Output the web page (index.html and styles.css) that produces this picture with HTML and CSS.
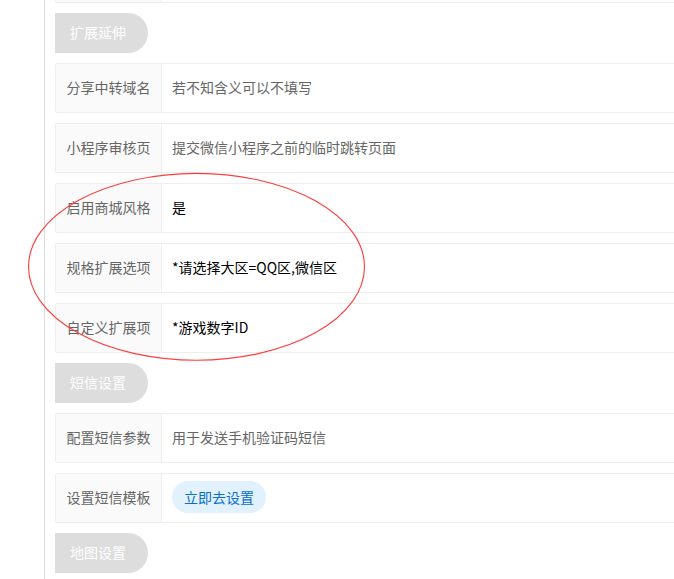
FILE: index.html
```html
<!DOCTYPE html>
<html lang="zh-CN">
<head>
<meta charset="utf-8">
<title>设置</title>
<link rel="stylesheet" href="styles.css">
</head>
<body>
<div class="page">
  <div class="panel">
    <div class="row"><div class="label"></div><div class="value desc"></div></div>

    <div class="section">扩展延伸</div>
    <div class="row"><div class="label">分享中转域名</div><div class="value desc">若不知含义可以不填写</div></div>
    <div class="row"><div class="label">小程序审核页</div><div class="value desc">提交微信小程序之前的临时跳转页面</div></div>
    <div class="row"><div class="label">启用商城风格</div><div class="value">是</div></div>
    <div class="row"><div class="label">规格扩展选项</div><div class="value">*请选择大区=QQ区,微信区</div></div>
    <div class="row"><div class="label">自定义扩展项</div><div class="value">*游戏数字ID</div></div>

    <div class="section">短信设置</div>
    <div class="row"><div class="label">配置短信参数</div><div class="value desc">用于发送手机验证码短信</div></div>
    <div class="row"><div class="label">设置短信模板</div><div class="value"><a class="pill" href="#">立即去设置</a></div></div>

    <div class="section">地图设置</div>
  </div>
</div>
<svg class="mark" width="674" height="579" viewBox="0 0 674 579" aria-hidden="true">
  <ellipse cx="196.5" cy="266.8" rx="168" ry="93.4" fill="none" stroke="#ff3b3b" stroke-width="1.1"/>
</svg>
</body>
</html>
```

FILE: styles.css
```css
html, body {
  margin: 0;
  padding: 0;
  overflow: hidden;
  background: #fff;
}
body {
  font-family: "Noto Sans CJK SC", "Microsoft YaHei", sans-serif;
  font-size: 14px;
  width: 674px;
  height: 579px;
  position: relative;
}
.page {
  margin-left: 44px;
  margin-top: -47px;
  border-left: 1px solid #dddddd;
  height: 626px;
  padding-left: 10px;
}
.panel {
  display: flex;
  flex-direction: column;
  gap: 10px;
  width: 619px;
}
.row {
  display: flex;
  height: 48px;
  border: 1px solid #eeeeee;
  border-right: 0;
  border-radius: 3px 0 0 3px;
  align-items: stretch;
}
.label {
  width: 106px;
  flex: none;
  background: #fafafa;
  border-right: 1px solid #eeeeee;
  color: #666;
  display: flex;
  align-items: center;
  justify-content: center;
  padding-bottom: 2px;
  box-sizing: border-box;
  border-radius: 3px 0 0 3px;
}
.value {
  display: flex;
  align-items: center;
  padding-left: 10px;
  padding-bottom: 2px;
  color: #000;
}
.value.desc {
  color: #666;
}
.section {
  align-self: flex-start;
  height: 40px;
  line-height: 38px;
  background: #dddddd;
  color: #fff;
  padding: 0 22px 0 15px;
  border-radius: 0 20px 20px 0;
}
.pill {
  display: inline-block;
  height: 32px;
  line-height: 32px;
  padding: 0 12px;
  border-radius: 16px;
  background: #e1f1fd;
  color: #0a6fc8;
  text-decoration: none;
}
.mark {
  position: absolute;
  left: 0;
  top: 0;
  pointer-events: none;
}
```
